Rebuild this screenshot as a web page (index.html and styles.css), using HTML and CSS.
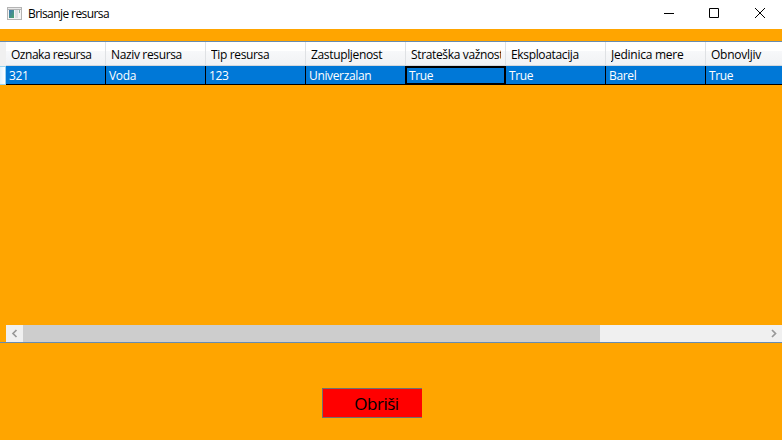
FILE: index.html
```html
<!DOCTYPE html>
<html lang="sr">
<head>
<meta charset="utf-8">
<title>Brisanje resursa</title>
<link rel="stylesheet" href="styles.css">
</head>
<body>
<header class="titlebar">
  <svg class="app-icon" width="16" height="14" viewBox="0 0 16 14"><defs><linearGradient id="g" x2="1" y2="1"><stop stop-color="#3f78b5"/><stop offset="1" stop-color="#49a36b"/></linearGradient></defs><path fill="#b4b4b4" d="M0 0h15v13H0z"/><path fill="#e9e9e9" d="M1 1h13v1H1z"/><path fill="#f4f4f4" d="M1 3h13v9H1z"/><path fill="url(#g)" d="M2 3h5v8H2z"/><path fill="#dcdfe2" d="M8 3h3v8H8z"/><path fill="#8fb4a4" d="M12 3h1v3h-1z"/></svg>
  <h1 class="title">Brisanje resursa</h1>
  <div class="controls">
    <svg width="46" height="29" viewBox="0 0 46 29"><path d="M20 13.500h10"/></svg>
    <svg width="46" height="29" viewBox="0 0 46 29"><path d="M19.500 8.500h9v9h-9z"/></svg>
    <svg width="46" height="29" viewBox="0 0 46 29"><path d="M19 8l10 10M29 8L19 18"/></svg>
  </div>
</header>
<main>
  <section class="grid">
    <div class="row head">
      <div class="gutter"></div>
      <div class="cell"><span class="tight">Oznaka resursa</span></div>
      <div class="cell"><span>Naziv resursa</span></div>
      <div class="cell"><span>Tip resursa</span></div>
      <div class="cell"><span>Zastupljenost</span></div>
      <div class="cell"><span>Strateška važnost</span></div>
      <div class="cell"><span>Eksploatacija</span></div>
      <div class="cell"><span class="loose">Jedinica mere</span></div>
      <div class="cell"><span class="loose">Obnovljiv</span></div>
    </div>
    <div class="row data">
      <div class="gutter"></div>
      <div class="cell">321</div>
      <div class="cell">Voda</div>
      <div class="cell">123</div>
      <div class="cell">Univerzalan</div>
      <div class="cell current">True</div>
      <div class="cell">True</div>
      <div class="cell">Barel</div>
      <div class="cell">True</div>
    </div>
    <div class="scrollbar">
      <svg width="17" height="17" viewBox="0 0 17 17"><path d="M10.500 5L7 8.500l3.500 3.500"/></svg>
      <div class="track"><div class="thumb"></div></div>
      <svg width="17" height="17" viewBox="0 0 17 17"><path d="M7 5l3.500 3.500L7 12"/></svg>
    </div>
  </section>
  <button class="delete"><span>Obriši</span></button>
</main>
</body>
</html>
```
FILE: styles.css
```css
* { box-sizing: border-box; }
body {
  margin: 0;
  height: 440px;
  overflow: hidden;
  background: #ffa500;
  font: 12px/16px "Open Sans", "Noto Sans", sans-serif;
  letter-spacing: -0.35px;
  color: #000;
}
.titlebar {
  display: flex;
  height: 29px;
  padding-left: 7px;
  background: #fff;
}
.app-icon { margin-top: 7px; }
.title {
  margin: 6px 0 0 5px;
  font-size: 12px;
  font-weight: 400;
  letter-spacing: -0.58px;
}
.controls { display: flex; margin-left: auto; }
.controls svg { fill: none; stroke: #000; }
main {
  display: flex;
  flex-direction: column;
  align-items: flex-start;
  padding-top: 12px;
}
.grid {
  display: flex;
  flex-direction: column;
  width: 782px;
  height: 302px;
  border: solid #688caf;
  border-width: 1px 0;
  overflow: hidden;
}
.row { display: flex; flex: none; width: 806px; }
.gutter { width: 6px; flex: none; }
.cell { width: 100px; flex: none; overflow: hidden; white-space: nowrap; }
.head { height: 24px; }
.head .gutter { background: #f0f0f0; }
.head .cell {
  padding: 5px 4px 0 5px;
  border-right: 1px solid #dfe1e4;
  border-bottom: 1px solid #d3d8dd;
  background: linear-gradient(#fff 0 40%, #f7f8fa 41%, #f1f2f4);
}
.head span { display: block; overflow: hidden; }
.tight { letter-spacing: -0.48px; }
.loose { letter-spacing: -0.25px; }
.data { height: 19px; color: #fff; }
.data .gutter {
  border: 1px solid #98d3f0;
  border-left: 0;
  background: linear-gradient(90deg, #e1f3fc, #fff);
}
.data .cell {
  padding: 2px 3px 0;
  border: solid #000;
  border-width: 0 1px 1px 0;
  background: #0078d7;
}
.data .current {
  position: relative;
  z-index: 1;
  width: 101px;
  margin-left: -1px;
  padding: 0 2px;
  border-width: 2px;
}
.scrollbar {
  display: flex;
  height: 17px;
  margin: auto 0 0 6px;
  background: #f0f0f0;
}
.scrollbar svg { flex: none; fill: none; stroke: #989898; stroke-width: 1.7; }
.track { flex: 1; }
.thumb { width: 577px; height: 17px; background: #cdcdcd; }
.delete {
  width: 100px;
  height: 30px;
  margin: 45px 0 0 322px;
  padding: 1px 0 0 8px;
  border: 1px solid #707070;
  border-right: 0;
  background: #f00;
  color: #000;
  font: 17px/28px "Open Sans", sans-serif;
  letter-spacing: -0.5px;
}
```
